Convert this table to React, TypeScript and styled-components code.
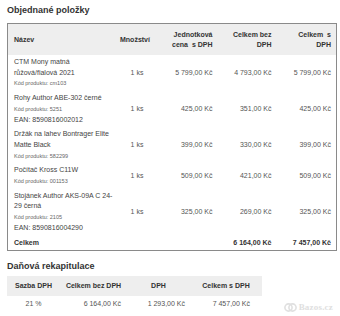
import React from 'react';
import styled, { createGlobalStyle } from 'styled-components';

const GlobalStyle = createGlobalStyle`
  html, body {
    margin: 0;
    padding: 0;
    background: #fff;
  }
  body {
    font-family: 'Liberation Sans', Arial, sans-serif;
    color: #333;
  }
`;

const StyledPage = styled.div`
  position: relative;
  width: 340px;
  height: 316px;
  box-sizing: border-box;
  padding: 4px 4px 0 7px;
  overflow: hidden;
`;

const StyledTitle = styled.h2`
  margin: 0;
  font-size: 9px;
  line-height: 12px;
  font-weight: bold;
  color: #333;
`;

const StyledOrderTable = styled.table`
  width: 329px;
  margin-top: 7px;
  border-collapse: collapse;
  border: 1px solid #8a8a8a;
  table-layout: fixed;
  font-size: 7px;
`;

const StyledHeadCell = styled.th<{ $align?: string; $width: number }>`
  box-sizing: border-box;
  width: ${(p) => p.$width}px;
  background: #eeeeee;
  font-weight: bold;
  line-height: 10px;
  padding: 5.5px 5px 5.5px 2px;
  text-align: ${(p) => p.$align || 'right'};
  color: #333;
  vertical-align: middle;
  white-space: nowrap;

  &:first-child {
    padding-left: 6px;
  }
`;

const StyledCell = styled.td<{ $align?: string; $bold?: boolean }>`
  padding: 2px 5px 2px 6px;
  line-height: 10.7px;
  text-align: ${(p) => p.$align || 'right'};
  vertical-align: middle;
  font-weight: ${(p) => (p.$bold ? 'bold' : 'normal')};
  color: ${(p) => (p.$bold ? '#333' : '#555')};
  white-space: nowrap;
`;

const StyledName = styled.div`
  color: #444;
`;

const StyledCode = styled.div`
  font-size: 5.5px;
  color: #666;
`;

const StyledTotalRow = styled.tr`
  td {
    padding-top: 2px;
    padding-bottom: 2px;
  }
`;

const StyledSubTitle = styled(StyledTitle)`
  margin-top: 9px;
`;

const StyledTaxTable = styled.table`
  width: 255px;
  margin-top: 4px;
  border-collapse: collapse;
  table-layout: fixed;
  font-size: 7px;
`;

const StyledTaxHead = styled.th<{ $width: number }>`
  box-sizing: border-box;
  width: ${(p) => p.$width}px;
  background: #eeeeee;
  font-weight: bold;
  line-height: 10px;
  padding: 5px 0;
  text-align: center;
  color: #333;
`;

const StyledTaxCell = styled.td<{ $align?: string; $pad?: number }>`
  line-height: 10px;
  padding: 3px ${(p) => p.$pad ?? 0}px 3px 0;
  text-align: ${(p) => p.$align || 'right'};
  color: #555;
`;

const StyledWatermark = styled.div`
  position: absolute;
  right: 7px;
  bottom: 4px;
  display: flex;
  align-items: center;
  gap: 2px;
  color: #e0e0e0;
  font-family: 'Liberation Serif', serif;
  font-size: 9px;
  font-weight: bold;
  letter-spacing: 0.2px;
`;

type Item = {
  lines: string[];
  code: string;
  ean?: string;
  unit: string;
  net: string;
  gross: string;
};

const items: Item[] = [
  {
    lines: ['CTM Mony matná', 'růžová/fialová 2021'],
    code: 'cm103',
    unit: '5 799,00 Kč',
    net: '4 793,00 Kč',
    gross: '5 799,00 Kč',
  },
  {
    lines: ['Rohy Author ABE-302 černé'],
    code: '5251',
    ean: '8590816002012',
    unit: '425,00 Kč',
    net: '351,00 Kč',
    gross: '425,00 Kč',
  },
  {
    lines: ['Držák na lahev Bontrager Elite', 'Matte Black'],
    code: '582299',
    unit: '399,00 Kč',
    net: '330,00 Kč',
    gross: '399,00 Kč',
  },
  {
    lines: ['Počítač Kross C11W'],
    code: '001153',
    unit: '509,00 Kč',
    net: '421,00 Kč',
    gross: '509,00 Kč',
  },
  {
    lines: ['Stojánek Author AKS-09A C 24-', '29 černá'],
    code: '2105',
    ean: '8590816004290',
    unit: '325,00 Kč',
    net: '269,00 Kč',
    gross: '325,00 Kč',
  },
];

const WatermarkIcon = () => (
  <svg width="13" height="9" viewBox="0 0 13 9">
    <circle cx="4.5" cy="4.5" r="3.6" fill="none" stroke="#e0e0e0" strokeWidth="1.6" />
    <circle cx="8.5" cy="4.5" r="3.6" fill="none" stroke="#e0e0e0" strokeWidth="1.6" />
  </svg>
);

export default function App() {
  return (
    <StyledPage>
      <GlobalStyle />
      <StyledTitle>Objednané položky</StyledTitle>
      <StyledOrderTable>
        <thead>
          <tr>
            <StyledHeadCell $align="left" $width={101}>Název</StyledHeadCell>
            <StyledHeadCell $align="center" $width={56}>Množství</StyledHeadCell>
            <StyledHeadCell $width={53}>
              Jednotková
              <br />
              cena &nbsp;s DPH
            </StyledHeadCell>
            <StyledHeadCell $width={59}>
              Celkem bez
              <br />
              DPH
            </StyledHeadCell>
            <StyledHeadCell $width={60}>
              Celkem &nbsp;s
              <br />
              DPH
            </StyledHeadCell>
          </tr>
        </thead>
        <tbody>
          {items.map((item) => (
            <tr key={item.code}>
              <StyledCell $align="left">
                {item.lines.map((line) => (
                  <StyledName key={line}>{line}</StyledName>
                ))}
                <StyledCode>Kód produktu: {item.code}</StyledCode>
                {item.ean && <StyledName>EAN: {item.ean}</StyledName>}
              </StyledCell>
              <StyledCell $align="center">1 ks</StyledCell>
              <StyledCell>{item.unit}</StyledCell>
              <StyledCell>{item.net}</StyledCell>
              <StyledCell>{item.gross}</StyledCell>
            </tr>
          ))}
          <StyledTotalRow>
            <StyledCell $align="left" $bold>Celkem</StyledCell>
            <StyledCell />
            <StyledCell />
            <StyledCell $bold>6 164,00 Kč</StyledCell>
            <StyledCell $bold>7 457,00 Kč</StyledCell>
          </StyledTotalRow>
        </tbody>
      </StyledOrderTable>

      <StyledSubTitle>Daňová rekapitulace</StyledSubTitle>
      <StyledTaxTable>
        <thead>
          <tr>
            <StyledTaxHead $width={53}>Sazba DPH</StyledTaxHead>
            <StyledTaxHead $width={67}>Celkem bez DPH</StyledTaxHead>
            <StyledTaxHead $width={63}>DPH</StyledTaxHead>
            <StyledTaxHead $width={72}>Celkem s DPH</StyledTaxHead>
          </tr>
        </thead>
        <tbody>
          <tr>
            <StyledTaxCell $align="center">21 %</StyledTaxCell>
            <StyledTaxCell $pad={6}>6 164,00 Kč</StyledTaxCell>
            <StyledTaxCell $pad={5}>1 293,00 Kč</StyledTaxCell>
            <StyledTaxCell $pad={12}>7 457,00 Kč</StyledTaxCell>
          </tr>
        </tbody>
      </StyledTaxTable>

      <StyledWatermark>
        <WatermarkIcon />
        <span>Bazos.cz</span>
      </StyledWatermark>
    </StyledPage>
  );
}
